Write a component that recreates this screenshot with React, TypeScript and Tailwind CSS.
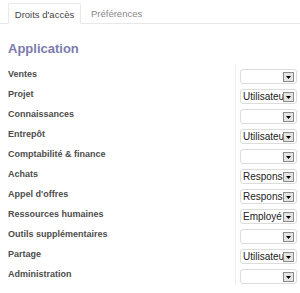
import React from "react";

const rows: [string, string][] = [
  ["Ventes", ""],
  ["Projet", "Utilisateur"],
  ["Connaissances", ""],
  ["Entrepôt", "Utilisateur"],
  ["Comptabilité & finance", ""],
  ["Achats", "Responsable"],
  ["Appel d'offres", "Responsable"],
  ["Ressources humaines", "Employé"],
  ["Outils supplémentaires", ""],
  ["Partage", "Utilisateur"],
  ["Administration", ""],
];

function Select({ value }: { value: string }) {
  return (
    <div className="relative h-[15px] w-[57px] rounded-[3px] border border-[#dcdcdc] bg-white">
      <div className="absolute left-[2px] top-0 w-[40px] overflow-hidden whitespace-nowrap text-[10px] leading-[13px] text-[#222]">{value}</div>
      <div className="absolute right-[2px] top-[2px] flex h-[10px] w-[11px] items-center justify-center border border-[#8a8a8a] bg-[#e4e4e4]">
        <svg width="5" height="3" viewBox="0 0 5 3"><path d="M0 0h5L2.5 3z" fill="#000" /></svg>
      </div>
    </div>
  );
}

export default function App() {
  return (
    <div className="h-[293px] w-[300px] overflow-hidden bg-white" style={{ fontFamily: '"Liberation Sans", Arial, sans-serif' }}>
      <div className="flex border-b border-[#e8e8e8] pl-[8px] pt-[3px]">
        <div className="-mb-px h-[21px] w-[73px] rounded-t-[2px] border border-[#e8e8e8] border-b-white bg-white pt-[5px] text-center text-[9.5px] leading-[11px] text-[#444]">Droits d'accès</div>
        <div className="h-[20px] pl-[10px] pt-[5px] text-[9.5px] leading-[11px] text-[#888]">Préférences</div>
      </div>
      <div className="pl-[8px] pt-[17px] text-[13px] font-bold leading-[16px] text-[#7c7bad]">Application</div>
      <div className="mt-[8px] flex flex-col">
        {rows.map(([label, value], i) => (
          <div key={i} className="flex h-[20px]">
            <div className="w-[235px] pl-[8px] pt-[4px] text-[9px] font-bold leading-[11px] text-[#4c4c4c]">{label}</div>
            <div className="h-full border-l border-[#eeeeee] pl-[4px] pt-[4px]">
              <Select value={value} />
            </div>
          </div>
        ))}
      </div>
    </div>
  );
}
